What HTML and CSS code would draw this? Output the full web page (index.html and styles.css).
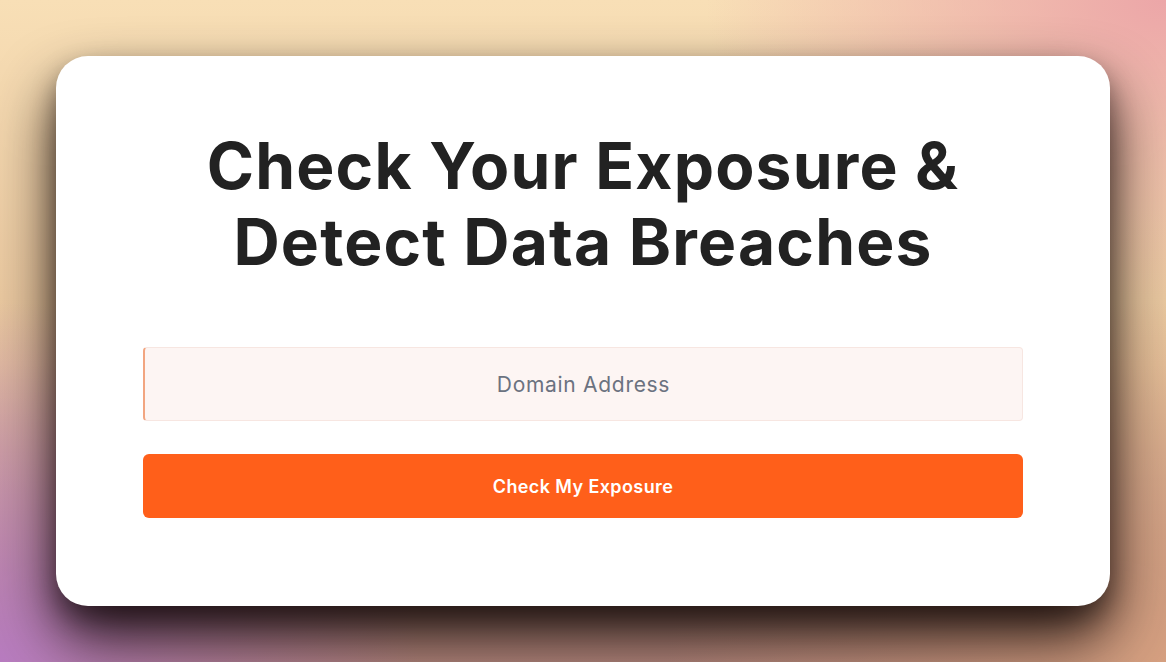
FILE: index.html
```html
<!DOCTYPE html>
<html lang="en">
<head>
<meta charset="utf-8">
<title>Check Your Exposure</title>
<link rel="stylesheet" href="styles.css">
</head>
<body>
<main class="card">
  <h1 class="title">Check Your Exposure &amp;<br>Detect Data Breaches</h1>
  <form class="form">
    <input class="field" type="text" placeholder="Domain Address">
    <button class="btn" type="button">Check My Exposure</button>
  </form>
</main>
</body>
</html>
```

FILE: styles.css
```css
* { box-sizing: border-box; }
html, body { margin: 0; height: 100%; }
body {
  width: 1166px;
  height: 662px;
  display: flex;
  align-items: center;
  justify-content: center;
  font-family: "Inter", "Noto Sans", sans-serif;
  background:
    radial-gradient(ellipse 420px 360px at 0% 100%, rgba(184,124,192,1) 0%, rgba(184,124,192,0) 100%),
    radial-gradient(ellipse 460px 300px at 100% 0%, rgba(236,166,168,1) 0%, rgba(236,166,168,0) 100%),
    radial-gradient(ellipse 500px 360px at 100% 100%, rgba(214,160,128,1) 0%, rgba(214,160,128,0) 100%),
    linear-gradient(180deg, #f8dfb6 0%, #e8c49c 55%, #b88a80 100%);
}
.card {
  width: 1054px;
  height: 550px;
  background: #fff;
  border-radius: 32px;
  padding: 72px 87px 88px;
  box-shadow: 0 32px 60px rgba(10, 2, 2, 0.85), 0 12px 24px rgba(10, 2, 2, 0.35);
  display: flex;
  flex-direction: column;
}
.title {
  margin: 0;
  text-align: center;
  font-size: 64px;
  line-height: 76px;
  font-weight: 700;
  color: #222222;
  letter-spacing: 1.2px;
}
.form {
  margin-top: 67px;
  display: flex;
  flex-direction: column;
  gap: 33px;
}
.field {
  width: 100%;
  height: 74px;
  background: #fdf5f3;
  border: 1px solid #f7e6e1;
  border-left: 2px solid #f2a580;
  border-radius: 4px;
  text-align: center;
  font-family: inherit;
  font-size: 21px;
  letter-spacing: 0.7px;
  color: #333;
  outline: none;
}
.field::placeholder { color: #6b7280; }
.btn {
  width: 100%;
  height: 64px;
  background: #ff5f1a;
  border: none;
  border-radius: 6px;
  color: #fff;
  font-family: inherit;
  font-size: 18px;
  letter-spacing: 0.4px;
  font-weight: 600;
}
```
